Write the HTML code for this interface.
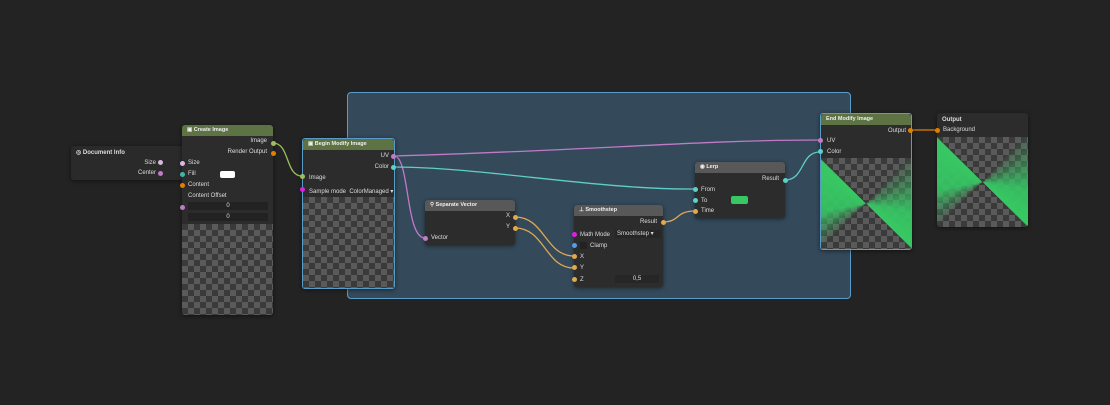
<!DOCTYPE html><html><head><style>
body{margin:0;width:1110px;height:405px;background:#232323;overflow:hidden;position:relative;font-family:"Liberation Sans",sans-serif;font-size:6px;color:#ddd}
.n{position:absolute;background:#2c2c2c;border-radius:3px;box-shadow:0 1px 4px rgba(0,0,0,.5)}
.h{height:11px;line-height:11px;padding-left:5px;font-weight:bold;font-size:5.5px;border-radius:3px 3px 0 0;color:#eee}
.g{background:#5d7344}.d{background:#383838}.gr{background:#585858}
.t{position:absolute;white-space:nowrap}
.ck{position:absolute;background-color:#3a3a3a;background-image:linear-gradient(45deg,#5a5a5a 25%,transparent 25%,transparent 75%,#5a5a5a 75%),linear-gradient(45deg,#5a5a5a 25%,transparent 25%,transparent 75%,#5a5a5a 75%);background-size:12px 12px;background-position:0 0,6px 6px}
.p{position:absolute;width:5px;height:5px;border-radius:50%}
.f{position:absolute;background:#222;height:8px;text-align:center;line-height:8px}
.gt{position:absolute;inset:0;background:conic-gradient(from 0deg at 50% 50%,transparent 0deg,transparent 40deg,rgba(54,200,100,.9) 100deg,#37c863 134deg,transparent 135deg,transparent 225deg,rgba(54,200,100,.9) 260deg,#37c863 314deg,transparent 315deg)}
</style></head><body>
<div style="position:absolute;left:347px;top:92px;width:502px;height:205px;background:#34495a;border:1px solid #5a9cc8;border-radius:4px"></div>
<svg width="1110" height="405" style="position:absolute;left:0;top:0">
<g fill="none" stroke-width="1.3">
<path d="M161 163 L182 163" stroke="#c9a0d0"/>
<path d="M273 143 C290 143,285 176,302 176" stroke="#9bc060"/>
<path d="M394 156 C600 150,700 140,820 140" stroke="#c07ac8"/>
<path d="M394 156 C410 156,405 238,425 238" stroke="#c07ac8"/>
<path d="M394 167 C480 167,600 190,695 189" stroke="#5fd0c8"/>
<path d="M785 180 C805 180,800 152,820 152" stroke="#5fd0c8"/>
<path d="M515 217 C545 217,545 256,574 256" stroke="#e0a850"/>
<path d="M515 228 C545 228,545 268,574 268" stroke="#e0a850"/>
<path d="M663 222 C680 222,675 211,695 211" stroke="#e0a850"/>
<path d="M911 130 L937 130" stroke="#e08000"/>
</g></svg>
<!-- Document Info -->
<div class="n" style="left:71px;top:146px;width:119px;height:34px;background:#2a2a2a">
<div class="t" style="left:5px;top:3px;font-weight:bold">◎ Document Info</div>
<div class="t" style="right:34px;top:14px">Size</div><div class="t" style="right:34px;top:24px">Center</div></div>
<div class="p" style="left:158px;top:160px;background:#d9b8e0"></div>
<div class="p" style="left:158px;top:171px;background:#c07ac8"></div>
<!-- Create Image -->
<div class="n" style="left:182px;top:125px;width:91px;height:190px">
<div class="h g">▣ Create Image</div>
<div class="t" style="right:6px;top:13px">Image</div>
<div class="t" style="right:6px;top:24px">Render Output</div>
<div class="t" style="left:6px;top:35px">Size</div>
<div class="t" style="left:6px;top:46px">Fill</div>
<div style="position:absolute;left:38px;top:46px;width:15px;height:7px;background:#fff;border-radius:2px"></div>
<div class="t" style="left:6px;top:57px">Content</div>
<div class="t" style="left:6px;top:68px">Content Offset</div>
<div class="f" style="left:6px;top:77px;width:80px">0</div>
<div class="f" style="left:6px;top:88px;width:80px">0</div>
<div class="ck" style="left:0;top:99px;width:91px;height:91px;border-radius:0 0 3px 3px"></div></div>
<div class="p" style="left:180px;top:161px;background:#d9b8e0"></div>
<div class="p" style="left:180px;top:172px;background:#3cb8a8"></div>
<div class="p" style="left:180px;top:183px;background:#e08000"></div>
<div class="p" style="left:180px;top:205px;background:#c07ac8"></div>
<div class="p" style="left:271px;top:141px;background:#9bc060"></div>
<div class="p" style="left:271px;top:151px;background:#e08000"></div>
<!-- Begin Modify -->
<div class="n" style="left:302px;top:138px;width:91px;height:149px;border:1px solid #5a9cc8">
<div class="h g">▣ Begin Modify Image</div>
<div class="t" style="right:5px;top:14px">UV</div>
<div class="t" style="right:5px;top:25px">Color</div>
<div class="t" style="left:6px;top:36px">Image</div>
<div class="t" style="left:6px;top:49px">Sample mode &nbsp;ColorManaged ▾</div>
<div class="ck" style="left:0;top:58px;width:91px;height:91px"></div></div>
<div class="p" style="left:391px;top:154px;background:#c07ac8"></div>
<div class="p" style="left:391px;top:165px;background:#5fd0c8"></div>
<div class="p" style="left:300px;top:174px;background:#9bc060"></div>
<div class="p" style="left:300px;top:187px;background:#e020e0"></div>
<!-- Separate Vector -->
<div class="n" style="left:425px;top:200px;width:90px;height:45px">
<div class="h gr">⚲ Separate Vector</div>
<div class="t" style="right:5px;top:13px">X</div><div class="t" style="right:5px;top:24px">Y</div>
<div class="t" style="left:6px;top:35px">Vector</div></div>
<div class="p" style="left:513px;top:215px;background:#e0a850"></div>
<div class="p" style="left:513px;top:226px;background:#e0a850"></div>
<div class="p" style="left:423px;top:236px;background:#c07ac8"></div>
<!-- Smoothstep -->
<div class="n" style="left:574px;top:205px;width:89px;height:82px">
<div class="h gr">⊥ Smoothstep</div>
<div class="t" style="right:6px;top:14px">Result</div>
<div class="t" style="left:6px;top:27px">Math Mode</div>
<div class="f" style="left:41px;top:25px;width:44px;text-align:left;padding-left:2px;background:#262626">Smoothstep ▾</div>
<div style="position:absolute;left:6px;top:37px;width:7px;height:7px;background:#222"></div>
<div class="t" style="left:16px;top:38px">Clamp</div>
<div class="t" style="left:6px;top:49px">X</div>
<div class="t" style="left:6px;top:60px">Y</div>
<div class="t" style="left:6px;top:72px">Z</div>
<div class="f" style="left:41px;top:70px;width:44px;background:#262626">0,5</div></div>
<div class="p" style="left:661px;top:220px;background:#e0a850"></div>
<div class="p" style="left:572px;top:232px;background:#e020e0"></div>
<div class="p" style="left:572px;top:243px;background:#5a9ce0"></div>
<div class="p" style="left:572px;top:254px;background:#e0a850"></div>
<div class="p" style="left:572px;top:265px;background:#e0a850"></div>
<div class="p" style="left:572px;top:277px;background:#e0a850"></div>
<!-- Lerp -->
<div class="n" style="left:695px;top:162px;width:90px;height:56px">
<div class="h gr">◉ Lerp</div>
<div class="t" style="right:6px;top:14px">Result</div>
<div class="t" style="left:6px;top:25px">From</div>
<div class="t" style="left:6px;top:36px">To</div>
<div class="t" style="left:6px;top:46px">Time</div>
<div style="position:absolute;left:36px;top:34px;width:17px;height:8px;background:#37c863;border-radius:2px"></div></div>
<div class="p" style="left:783px;top:178px;background:#5fd0c8"></div>
<div class="p" style="left:693px;top:187px;background:#5fd0c8"></div>
<div class="p" style="left:693px;top:198px;background:#5fd0c8"></div>
<div class="p" style="left:693px;top:209px;background:#e0a850"></div>
<!-- End Modify -->
<div class="n" style="left:820px;top:113px;width:90px;height:135px;border:1px solid #5a9cc8">
<div class="h g">End Modify Image</div>
<div class="t" style="right:5px;top:14px">Output</div>
<div class="t" style="left:6px;top:24px">UV</div>
<div class="t" style="left:6px;top:35px">Color</div>
<div class="ck" style="left:0;top:44px;width:90px;height:91px;overflow:hidden"><div class="gt"></div></div></div>
<div class="p" style="left:908px;top:128px;background:#e08000"></div>
<div class="p" style="left:818px;top:138px;background:#c07ac8"></div>
<div class="p" style="left:818px;top:149px;background:#5fd0c8"></div>
<!-- Output -->
<div class="n" style="left:937px;top:113px;width:91px;height:114px">
<div class="t" style="left:5px;top:4px;font-weight:bold">Output</div>
<div class="t" style="left:6px;top:14px">Background</div>
<div class="ck" style="left:0;top:24px;width:91px;height:90px;overflow:hidden;border-radius:0 0 3px 3px"><div class="gt"></div></div></div>
<div class="p" style="left:935px;top:128px;background:#e08000"></div>
</body></html>
